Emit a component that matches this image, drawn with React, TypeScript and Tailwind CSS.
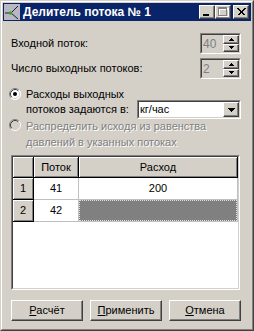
import React from "react";

const raised =
  "border border-t-white border-l-white border-r-[#404040] border-b-[#404040] shadow-[inset_-1px_-1px_0_#808080] bg-[#d4d0c8]";

function UpArrow() {
  return (
    <svg width="5" height="3" viewBox="0 0 5 3" shapeRendering="crispEdges">
      <rect x="2" y="0" width="1" height="1" fill="#000" />
      <rect x="1" y="1" width="3" height="1" fill="#000" />
      <rect x="0" y="2" width="5" height="1" fill="#000" />
    </svg>
  );
}

function DownArrow() {
  return (
    <svg width="5" height="3" viewBox="0 0 5 3" shapeRendering="crispEdges">
      <rect x="0" y="0" width="5" height="1" fill="#000" />
      <rect x="1" y="1" width="3" height="1" fill="#000" />
      <rect x="2" y="2" width="1" height="1" fill="#000" />
    </svg>
  );
}

function ComboArrow() {
  return (
    <svg width="7" height="4" viewBox="0 0 7 4" shapeRendering="crispEdges">
      <rect x="0" y="0" width="7" height="1" fill="#000" />
      <rect x="1" y="1" width="5" height="1" fill="#000" />
      <rect x="2" y="2" width="3" height="1" fill="#000" />
      <rect x="3" y="3" width="1" height="1" fill="#000" />
    </svg>
  );
}

function Sunken({ className, inner, children }: { className: string; inner: string; children: React.ReactNode }) {
  return (
    <div className={"border border-t-[#808080] border-l-[#808080] border-r-white border-b-white " + className}>
      <div className={"h-full border border-t-[#404040] border-l-[#404040] border-r-[#d4d0c8] border-b-[#d4d0c8] " + inner}>
        {children}
      </div>
    </div>
  );
}

function Spin({ value }: { value: string }) {
  return (
    <Sunken className="w-[41px] h-[21px]" inner="flex bg-[#d4d0c8]">
      <div className="flex-1 flex items-center pl-px text-[12px] text-[#808080]">{value}</div>
      <div className="w-[16px] h-full flex flex-col">
        <div className={"flex-1 flex items-center justify-center " + raised}>
          <UpArrow />
        </div>
        <div className={"flex-1 flex items-center justify-center " + raised}>
          <DownArrow />
        </div>
      </div>
    </Sunken>
  );
}

function Radio({ checked, disabled, className }: { checked?: boolean; disabled?: boolean; className?: string }) {
  return (
    <svg width="12" height="12" viewBox="0 0 12 12" className={"shrink-0 " + (className ?? "")}>
      <circle cx="6" cy="6" r="5.5" fill={disabled ? "#d4d0c8" : "#ffffff"} />
      <path d="M2.11 9.89 A5.5 5.5 0 0 1 9.89 2.11" fill="none" stroke="#808080" strokeWidth="1" />
      <path d="M9.89 2.11 A5.5 5.5 0 0 1 2.11 9.89" fill="none" stroke="#ffffff" strokeWidth="1" />
      <path d="M2.82 9.18 A4.5 4.5 0 0 1 9.18 2.82" fill="none" stroke="#404040" strokeWidth="1" />
      <path d="M9.18 2.82 A4.5 4.5 0 0 1 2.82 9.18" fill="none" stroke="#d4d0c8" strokeWidth="1" />
      {checked && <circle cx="6" cy="6" r="2" fill="#000" />}
    </svg>
  );
}

function Button({ first, rest }: { first: string; rest: string }) {
  return (
    <div className={"w-[72px] h-[21px] flex items-center justify-center " + raised}>
      <span>
        <span className="underline underline-offset-[1px]">{first}</span>
        {rest}
      </span>
    </div>
  );
}

const fixedCell =
  "bg-[#d4d0c8] border-r border-b border-r-black border-b-black shadow-[inset_1px_1px_0_#ffffff,inset_-1px_-1px_0_#808080] flex items-center justify-center";
const dataCell = "bg-white border-r border-b border-r-[#c0c0c0] border-b-[#c0c0c0] flex items-center justify-center";

export default function App() {
  return (
    <div className="w-[254px] h-[331px] bg-[#d4d0c8] font-['Liberation_Sans',Arial,sans-serif] text-[11px] text-black leading-none">
      <div className="h-full border border-t-[#d4d0c8] border-l-[#d4d0c8] border-r-[#404040] border-b-[#404040]">
        <div className="h-full border border-t-white border-l-white border-r-[#808080] border-b-[#808080] p-px flex flex-col">
          {/* Caption */}
          <div className="h-[18px] bg-[#0a246a] flex items-center pl-px pr-[2px] shrink-0">
            <svg width="16" height="16" viewBox="0 0 16 16" className="shrink-0">
              <rect x="0" y="0" width="16" height="16" fill="#b8b8c4" />
              <path d="M1 9 L7 9 L14 2" fill="none" stroke="#202020" strokeWidth="1" />
              <path d="M7 9 L14 15" fill="none" stroke="#202020" strokeWidth="1" />
              <circle cx="6.5" cy="9" r="1.8" fill="#3aa030" />
            </svg>
            <span className="ml-[3px] text-white font-bold text-[12px] flex-1 whitespace-nowrap">
              Делитель потока № 1
            </span>
            <div className={"w-[16px] h-[14px] flex " + raised}>
              <svg width="14" height="12" viewBox="0 0 14 12" shapeRendering="crispEdges">
                <rect x="3" y="8" width="6" height="2" fill="#000" />
              </svg>
            </div>
            <div className={"w-[16px] h-[14px] flex " + raised}>
              <svg width="14" height="12" viewBox="0 0 14 12" shapeRendering="crispEdges">
                <rect x="3" y="2" width="9" height="2" fill="#ffffff" />
                <rect x="3" y="2" width="1" height="8" fill="#ffffff" />
                <rect x="12" y="2" width="1" height="9" fill="#ffffff" />
                <rect x="3" y="10" width="10" height="1" fill="#ffffff" />
                <rect x="2" y="1" width="9" height="2" fill="#808080" />
                <rect x="2" y="1" width="1" height="8" fill="#808080" />
                <rect x="10" y="1" width="1" height="8" fill="#808080" />
                <rect x="2" y="9" width="9" height="1" fill="#808080" />
              </svg>
            </div>
            <div className={"ml-[2px] w-[16px] h-[14px] flex " + raised}>
              <svg width="14" height="12" viewBox="0 0 14 12" shapeRendering="crispEdges">
                <path d="M3.5 2.5 L10.5 9.5 M4.5 2.5 L11.5 9.5 M10.5 2.5 L3.5 9.5 M11.5 2.5 L4.5 9.5" stroke="#000" strokeWidth="1" />
              </svg>
            </div>
          </div>

          {/* Body */}
          <div className="flex-1 flex flex-col pl-[8px] pr-[10px]">
            <div className="mt-[12px] h-[21px] flex items-center justify-between">
              <span>Входной поток:</span>
              <Spin value="40" />
            </div>
            <div className="mt-[4px] h-[21px] flex items-center justify-between">
              <span>Число выходных потоков:</span>
              <Spin value="2" />
            </div>

            <div className="mt-[10px] flex">
              <Radio checked className="-ml-[2px] -mt-px" />
              <div className="ml-[5px] flex-1">
                <div className="h-[11px] leading-[11px]">Расходы выходных</div>
                <div className="h-[19px] flex items-center justify-between">
                  <span>потоков задаются в:</span>
                  <Sunken className="w-[104px] h-[19px]" inner="flex bg-white">
                    <div className="flex-1 flex items-center pl-px">кг/час</div>
                    <div className={"w-[16px] h-full flex items-center justify-center " + raised}>
                      <ComboArrow />
                    </div>
                  </Sunken>
                </div>
              </div>
            </div>

            <div className="-mt-px flex">
              <Radio disabled className="-ml-[2px] mt-[1px]" />
              <div className="ml-[5px] flex-1 leading-[16px] text-[#808080] [text-shadow:1px_1px_0_#ffffff]">
                <div>Распределить исходя из равенства</div>
                <div>давлений в укзанных потоках</div>
              </div>
            </div>

            {/* Grid */}
            <Sunken className="mt-[5px] w-[229px] h-[135px]" inner="bg-white flex flex-col">
              <div className="flex h-[21px]">
                <div className={"w-[21px] " + fixedCell}></div>
                <div className={"w-[45px] " + fixedCell}>Поток</div>
                <div className={"w-[159px] " + fixedCell}>Расход</div>
              </div>
              <div className="flex h-[22px]">
                <div className={"w-[21px] " + fixedCell}>1</div>
                <div className={"w-[45px] " + dataCell}>41</div>
                <div className={"w-[159px] " + dataCell}>200</div>
              </div>
              <div className="flex h-[22px]">
                <div className={"w-[21px] " + fixedCell}>2</div>
                <div className={"w-[45px] " + dataCell}>42</div>
                <div className="w-[159px] bg-white border-r border-b border-r-[#c0c0c0] border-b-[#c0c0c0] flex">
                  <div className="flex-1 bg-[#808080] border border-dotted border-[#e0e0e0]"></div>
                </div>
              </div>
            </Sunken>

            <div className="mt-[10px] flex justify-between">
              <Button first="Р" rest="асчёт" />
              <Button first="П" rest="рименить" />
              <Button first="О" rest="тмена" />
            </div>
          </div>
        </div>
      </div>
    </div>
  );
}
